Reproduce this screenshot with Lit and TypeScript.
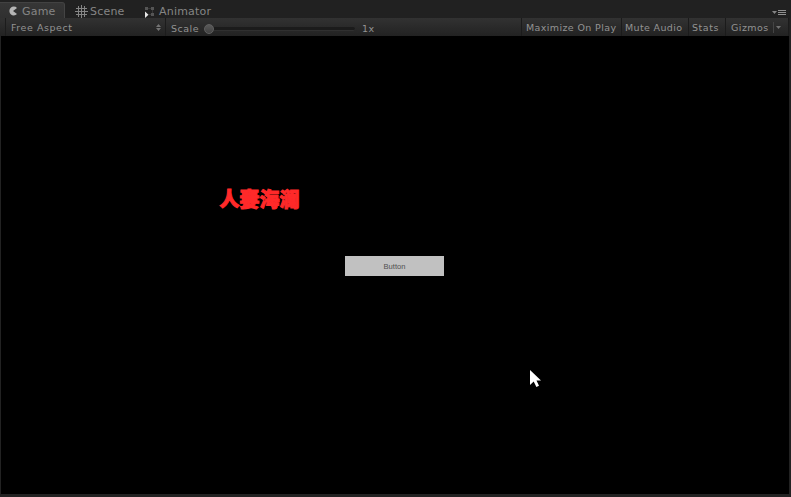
import { LitElement, html, css } from "lit";
import { customElement } from "lit/decorators.js";

@customElement("app-root")
export class AppRoot extends LitElement {
  static styles = css`
    :host { display: flex; flex-direction: column; position: relative; width: 791px; height: 497px; overflow: hidden; background: #222; font: 11px/17px "DejaVu Sans", sans-serif; color: #858585; white-space: nowrap; }
    * { box-sizing: border-box; }
    svg { display: block; flex: none; }
    .tabs { display: flex; height: 18px; flex: none; padding-top: 2px; background: #212121; }
    .tab { display: flex; height: 16px; padding-top: 1px; }
    .tab span { letter-spacing: 0.2px; }
    .active { width: 65px; background: linear-gradient(#363636, #303030); border-top: 1px solid #424242; border-right: 1px solid #444; border-radius: 0 3px 0 0; padding: 0 0 0 8px; }
    .active svg { margin: 3px 4px 0 0; }
    .scene { padding-left: 10px; width: 79px; }
    .scene svg { margin: 1px 2px 0 0; }
    .anim svg { margin: 3px 4px 0 0; }
    .menu { margin: 8px 5px 0 auto; }
    .bar { display: flex; height: 18px; flex: none; margin-right: 2px; background: linear-gradient(#323232, #222); font-size: 9.5px; line-height: 19px; color: #939393; letter-spacing: 0.55px; }
    .aspect { display: flex; justify-content: space-between; width: 161px; margin-left: 5px; padding: 0 4px 0 5px; border-left: 1px solid #1c1c1c; border-right: 1px solid #1c1c1c; }
    .aspect svg { margin-top: 6px; }
    .scale { width: 38px; padding: 1px 0 0 5px; letter-spacing: 0.5px; }
    .slider { display: flex; align-items: center; width: 151px; padding-top: 3px; }
    .knob { width: 10px; height: 10px; border-radius: 50%; background: linear-gradient(#5a5a5a, #414141); border: 1px solid #606060; flex: none; }
    .track { flex: 1; height: 4px; border-radius: 0 2px 2px 0; background: #1b1b1b; border-bottom: 1px solid #303030; }
    .zoom { padding: 1px 0 0 7px; flex: 1; }
    .btn { border-left: 1px solid #1b1b1b; padding-left: 4px; }
    .max { width: 100px; letter-spacing: 0.38px; }
    .mute { width: 67px; padding-left: 3px; letter-spacing: 0.35px; }
    .stats { width: 37px; padding-left: 3px; }
    .giz { display: flex; width: 64px; padding-left: 5px; border-right: 1px solid #1b1b1b; }
    .giz span { width: 41px; letter-spacing: 0.45px; }
    .giz svg { margin: 4px 0 0; }
    .view { position: relative; flex: 1; margin: 0 2px 3px 1px; background: #000; }
    .title { position: absolute; left: 218.5px; top: 148px; color: #ff2929; font: 900 20px/30px "Noto Sans CJK SC", sans-serif; -webkit-text-stroke: 1px #ff2929; }
    .button { position: absolute; left: 344px; top: 220px; width: 99px; height: 20px; padding: 1px 0 0; border: 0; background: #c1c1c1; color: #505050; font: 7.6px/19px "Liberation Sans", sans-serif; text-align: center; }
    .cursor { position: absolute; left: 529px; top: 334px; }
  `;

  render() {
    return html`
      <div class="tabs">
        <div class="tab active">
          <svg width="10" height="10"><path d="M9 2A4.4 4.4 0 1 0 9 8L5 5Z" fill="#b5b5b5" /></svg><span>Game</span>
        </div>
        <div class="tab scene">
          <svg width="13" height="14"><path d="M3.5 2V13M6.5 1V14M9.5 2V13M1 4.5H12M0 7.5H13M1 10.5H12" stroke="#858585" fill="none" /></svg><span>Scene</span>
        </div>
        <div class="tab anim">
          <svg width="11" height="12"><path d="M1 1h3v3H1zM7 1h3v3H7zM7 7h3v3H7z" fill="#555" /><path d="M4 2h3v1H4zM8 4h1v3H8zM5 8h2v1H5z" fill="#383838" /><path d="M1 5.5L4.5 8.7L1 12Z" fill="#e8e8e8" /></svg><span>Animator</span>
        </div>
        <svg class="menu" width="14" height="6"><path d="M0 1h5L2.5 4z" fill="#858585" /><path d="M6 .5h8M6 2.5h8M6 4.5h8" stroke="#909090" /></svg>
      </div>
      <div class="bar">
        <div class="aspect"><span>Free Aspect</span><svg width="5" height="7"><path d="M0 3L2.5 0L5 3zM0 4h5L2.5 7z" fill="#747474" /></svg></div>
        <div class="scale">Scale</div>
        <div class="slider"><i class="knob"></i><i class="track"></i></div>
        <div class="zoom">1x</div>
        <div class="btn max">Maximize On Play</div>
        <div class="btn mute">Mute Audio</div>
        <div class="btn stats">Stats</div>
        <div class="btn giz"><span>Gizmos</span><svg width="9" height="11"><path d="M1.5 0V11" stroke="#444" /><path d="M4 4h5L6.5 7z" fill="#727272" /></svg></div>
      </div>
      <div class="view">
        <div class="title">人妻海澜</div>
        <button class="button">Button</button>
        <svg class="cursor" width="12" height="18"><path d="M0 0V15L3.7 11.6L6.4 17L9 15.7L6.5 10.5H11Z" fill="#fff" /></svg>
      </div>
    `;
  }
}
